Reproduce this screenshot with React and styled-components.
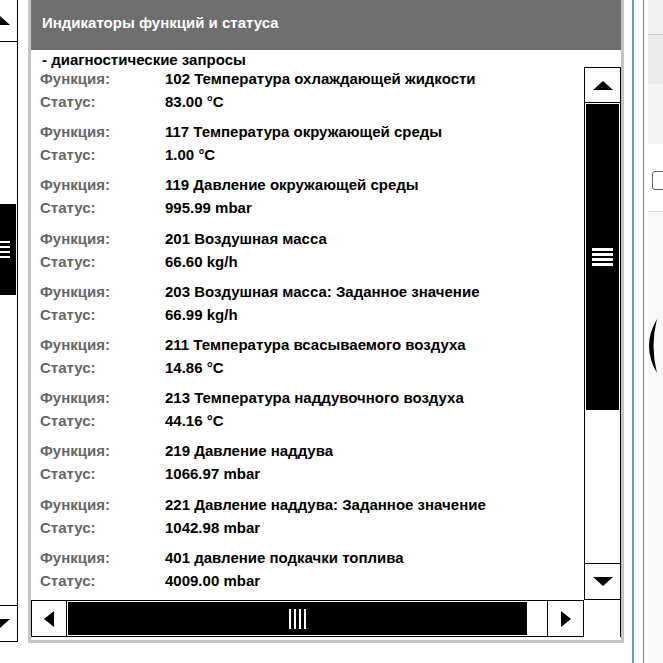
import React from 'react';
import styled, { createGlobalStyle, css } from 'styled-components';

const rows = [
  ['102 Температура охлаждающей жидкости', '83.00', '°C'],
  ['117 Температура окружающей среды', '1.00', '°C'],
  ['119 Давление окружающей среды', '995.99', 'mbar'],
  ['201 Воздушная масса', '66.60', 'kg/h'],
  ['203 Воздушная масса: Заданное значение', '66.99', 'kg/h'],
  ['211 Температура всасываемого воздуха', '14.86', '°C'],
  ['213 Температура наддувочного воздуха', '44.16', '°C'],
  ['219 Давление наддува', '1066.97', 'mbar'],
  ['221 Давление наддува: Заданное значение', '1042.98', 'mbar'],
  ['401 давление подкачки топлива', '4009.00', 'mbar'],
];

const GlobalStyle = createGlobalStyle`
  html, body { margin: 0; padding: 0; background: #fff; }
  body {
    font-family: "Liberation Sans", Arial, sans-serif;
    overflow: hidden;
  }
`;

const Page = styled.div`
  display: flex;
  width: 663px;
  height: 663px;
  background: #fff;
  overflow: hidden;
`;

const LeftStub = styled.div`
  width: 18px;
  height: 642px;
  flex-shrink: 0;
  display: flex;
  justify-content: flex-end;
  overflow: hidden;
`;

const Panel = styled.div`
  width: 596px;
  height: 643px;
  margin-left: 10px;
  flex-shrink: 0;
  box-sizing: border-box;
  border: 3px solid #c4c4c4;
  border-top: none;
  padding-bottom: 3px;
  display: flex;
  flex-direction: column;
`;

const Header = styled.div`
  height: 50px;
  flex-shrink: 0;
  box-sizing: border-box;
  padding: 14px 11px 0;
  background: #6e6e6e;
  color: #fff;
  font-weight: bold;
  font-size: 15px;
  line-height: 17px;
`;

const Title = styled.div`
  height: 17px;
  flex-shrink: 0;
  padding-left: 11px;
  font-weight: bold;
  font-size: 15px;
  line-height: 19px;
  color: #000;
`;

const Body = styled.div`
  flex: 1;
  min-height: 0;
  display: flex;
`;

const List = styled.div`
  flex: 1;
  overflow: hidden;
  padding-left: 9px;
`;

const Group = styled.div`
  margin-bottom: 7.2px;
`;

const Line = styled.div`
  display: flex;
  align-items: center;
  height: 23px;
  font-size: 15px;
  font-weight: bold;
  white-space: nowrap;
`;

const Label = styled.span`
  width: 125px;
  flex-shrink: 0;
  color: #666;
`;

const Value = styled.span`
  color: #000;
`;

const VScroll = styled.div`
  width: 37px;
  flex-shrink: 0;
  height: ${p => p.$height ? `${p.$height}px` : 'auto'};
  display: flex;
  flex-direction: column;
`;

const HScroll = styled.div`
  flex: 1;
  height: 37px;
  display: flex;
`;

const HRow = styled.div`
  height: 37px;
  flex-shrink: 0;
  display: flex;
`;

const Corner = styled.div`
  width: 37px;
  box-sizing: border-box;
  border-right: 1px solid #000;
`;

const ScrollButton = styled.div`
  flex: 0 0 ${p => p.$size}px;
  box-sizing: border-box;
  border: 1px solid #000;
  ${p => p.$open && css`border-top: none;`}
  background: #fff;
  display: flex;
  align-items: center;
  justify-content: center;
`;

const Arrow = styled.span`
  width: 0;
  height: 0;
  ${p => p.$dir === 'up' && css`
    border-left: 10px solid transparent;
    border-right: 10px solid transparent;
    border-bottom: 9px solid #000;
  `}
  ${p => p.$dir === 'down' && css`
    border-left: 10px solid transparent;
    border-right: 10px solid transparent;
    border-top: 9px solid #000;
  `}
  ${p => p.$dir === 'left' && css`
    border-top: 8px solid transparent;
    border-bottom: 8px solid transparent;
    border-right: 10px solid #000;
  `}
  ${p => p.$dir === 'right' && css`
    border-top: 8px solid transparent;
    border-bottom: 8px solid transparent;
    border-left: 10px solid #000;
  `}
`;

const VTrack = styled.div`
  flex: 1;
  box-sizing: border-box;
  border-left: 1px solid #000;
  border-right: 1px solid #000;
  padding: 1px;
  background: #fff;
  display: flex;
  flex-direction: column;
`;

const HTrack = styled.div`
  flex: 1;
  box-sizing: border-box;
  border-top: 1px solid #000;
  border-bottom: 1px solid #000;
  padding: 1px;
  background: #fff;
  display: flex;
`;

const Thumb = styled.div`
  background: #000;
  display: flex;
  align-items: center;
  justify-content: center;
  flex-shrink: 0;
  ${p => p.$axis === 'y'
    ? css`margin-top: ${p.$offset}px; height: ${p.$size}px;`
    : css`margin-left: ${p.$offset}px; width: ${p.$size}px;`}
`;

const Grip = styled.div`
  display: flex;
  flex-direction: ${p => p.$axis === 'y' ? 'column' : 'row'};
  gap: 2.5px;
`;

const GripLine = styled.span`
  background: #fff;
  ${p => p.$axis === 'y'
    ? css`width: 21px; height: 2.5px;`
    : css`width: 2.5px; height: 20px;`}
`;

const TealRule = styled.div`
  width: 2px;
  margin-left: 8px;
  flex-shrink: 0;
  background: #6b9fa0;
`;

const GreyRule = styled.div`
  width: 1px;
  margin-left: 9px;
  flex-shrink: 0;
  background: #7a7a7a;
`;

const RightStub = styled.div`
  flex: 1;
  margin-left: 4px;
  display: flex;
  flex-direction: column;
`;

const StubBar = styled.div`
  height: ${p => p.$h}px;
  flex-shrink: 0;
  background: ${p => p.$bg};
  border-bottom: ${p => p.$line ? '1px solid #c8c8c8' : 'none'};
`;

const StubBlank = styled.div`
  height: 67px;
  flex-shrink: 0;
  padding-top: 27px;
  box-sizing: border-box;
`;

const Checkbox = styled.div`
  width: 16px;
  height: 19px;
  margin-left: 4px;
  box-sizing: border-box;
  border: 1px solid #666;
  border-radius: 3px;
`;

const StubCard = styled.div`
  flex: 1;
  background: #f8f8f8;
  border-top: 1px solid #ddd;
  padding-top: 107px;
`;

function Grips({ axis }) {
  return (
    <Grip $axis={axis}>
      {[0, 1, 2, 3].map(i => <GripLine key={i} $axis={axis} />)}
    </Grip>
  );
}

function VerticalBar({ height, up, down, offset, size, open }) {
  return (
    <VScroll $height={height}>
      <ScrollButton $size={up} $open={open}><Arrow $dir="up" /></ScrollButton>
      <VTrack>
        <Thumb $axis="y" $offset={offset} $size={size}><Grips axis="y" /></Thumb>
      </VTrack>
      <ScrollButton $size={down}><Arrow $dir="down" /></ScrollButton>
    </VScroll>
  );
}

export default function App() {
  return (
    <>
      <GlobalStyle />
      <Page>
        <LeftStub>
          <VerticalBar height={642} up={42} down={37} offset={161} size={91} open />
        </LeftStub>

        <Panel>
          <Header>Индикаторы функций и статуса</Header>
          <Title>- диагностические запросы</Title>
          <Body>
            <List>
              {rows.map(([fn, value, unit]) => (
                <Group key={fn}>
                  <Line><Label>Функция:</Label><Value>{fn}</Value></Line>
                  <Line><Label>Статус:</Label><Value>{value} {unit}</Value></Line>
                </Group>
              ))}
            </List>
            <VerticalBar up={36} down={37} offset={0} size={306} />
          </Body>
          <HRow>
            <HScroll>
              <ScrollButton $size={36}><Arrow $dir="left" /></ScrollButton>
              <HTrack>
                <Thumb $axis="x" $offset={0} $size={459}><Grips axis="x" /></Thumb>
              </HTrack>
              <ScrollButton $size={37}><Arrow $dir="right" /></ScrollButton>
            </HScroll>
            <Corner />
          </HRow>
        </Panel>

        <TealRule />
        <GreyRule />
        <RightStub>
          <StubBar $h={34} $bg="#f0f0f0" $line />
          <StubBar $h={49} $bg="#ebebeb" />
          <StubBar $h={60} $bg="#f4f4f4" />
          <StubBlank><Checkbox /></StubBlank>
          <StubCard>
            <svg width="15" height="56" viewBox="0 0 15 56">
              <path d="M9 0 Q -7 27 9 54 Q 2 27 9 0 Z" fill="#000" />
            </svg>
          </StubCard>
        </RightStub>
      </Page>
    </>
  );
}
